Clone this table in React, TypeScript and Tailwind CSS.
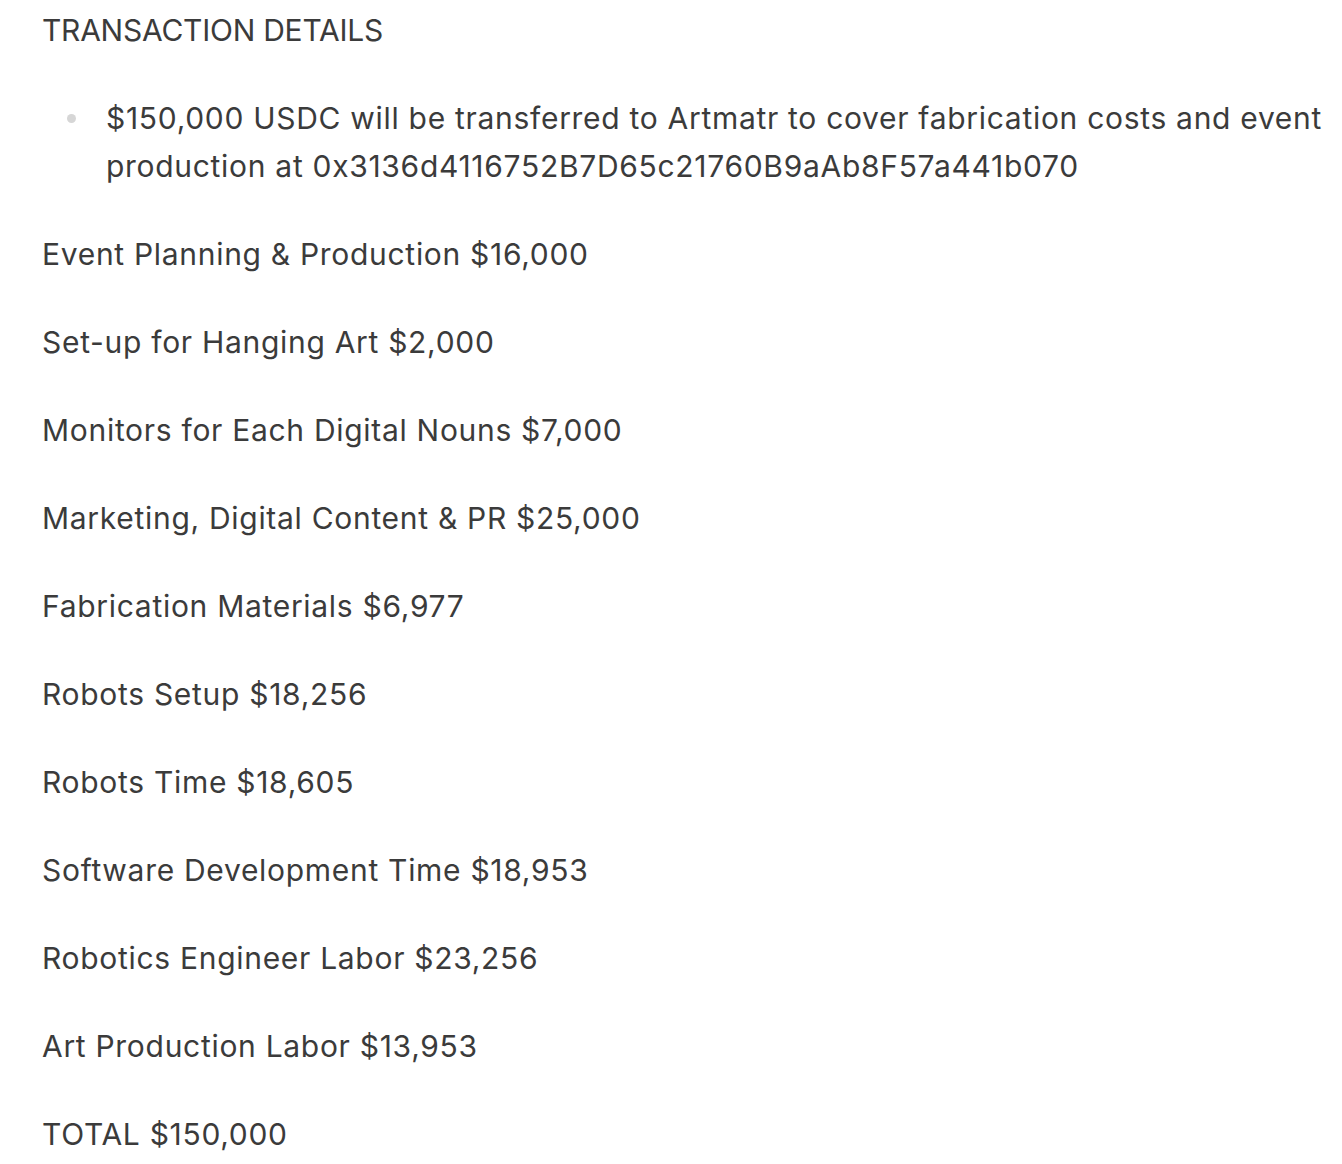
const items = [
  'Event Planning & Production $16,000',
  'Set-up for Hanging Art $2,000',
  'Monitors for Each Digital Nouns $7,000',
  'Marketing, Digital Content & PR $25,000',
  'Fabrication Materials $6,977',
  'Robots Setup $18,256',
  'Robots Time $18,605',
  'Software Development Time $18,953',
  'Robotics Engineer Labor $23,256',
  'Art Production Labor $13,953',
  'TOTAL $150,000',
];

export default function App() {
  return (
    <div className="min-h-screen bg-white pl-[42px] pr-2 pt-[6px] text-[30px] leading-[48px] tracking-[0.7px] text-[#3b3b3b] font-['Inter',sans-serif]">
      <h2 className="mb-10 tracking-[-0.25px]">TRANSACTION DETAILS</h2>
      <ul className="mb-10 pl-[25px]">
        <li className="flex items-start gap-[30px]">
          <span className="mt-[20px] h-[9px] w-[9px] shrink-0 rounded-full bg-[#d6d6d6]" />
          <span>
            $150,000 USDC will be transferred to Artmatr to cover fabrication costs and event production at
            0x3136d4116752B7D65c21760B9aAb8F57a441b070
          </span>
        </li>
      </ul>
      {items.map((t) => (
        <p key={t} className="mb-10">
          {t}
        </p>
      ))}
    </div>
  );
}
